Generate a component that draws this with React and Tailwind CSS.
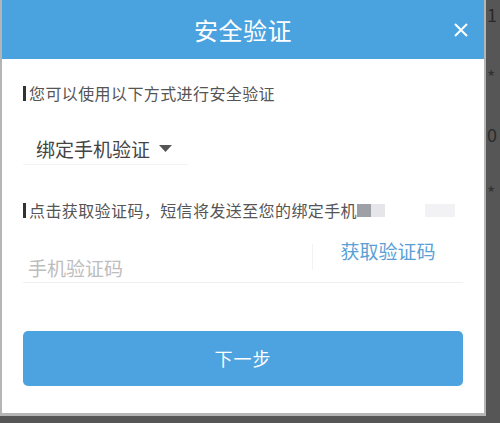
const FONT = { fontFamily: '"Microsoft YaHei", "Noto Sans CJK SC", "Noto Sans", sans-serif' };

// Section label with the small dark bar on the left
function Label({ children }) {
  return (
    <div className="flex items-center text-[16px] leading-none tracking-[0.4px] text-[#555]">
      <span className="mr-[3px] h-[15px] w-[3px] bg-[#333]" />
      {children}
    </div>
  );
}

export default function App() {
  return (
    <div className="flex h-[423px] w-[500px] overflow-hidden bg-[#565656]" style={FONT}>
      <div className="flex h-[416px] w-[486px] shrink-0 flex-col border-b-[3px] border-l-2 border-r-2 border-[#b5b5b5] bg-white">
        {/* Header */}
        <div className="relative flex h-[59px] shrink-0 items-center justify-center bg-[#4aa3df]">
          <h1 className="text-[24px] font-normal tracking-[0.5px] text-white">安全验证</h1>
          <button className="absolute right-[16px] top-[23px]">
            <svg width="14" height="14" viewBox="0 0 14 14">
              <path d="M1 1l12 12M13 1L1 13" stroke="#fff" strokeWidth="2" />
            </svg>
          </button>
        </div>

        <div className="flex flex-1 flex-col px-[21px]">
          <div className="mt-[26px]">
            <Label>您可以使用以下方式进行安全验证</Label>
          </div>

          {/* Method select */}
          <div className="mt-[38px] flex w-[165px] items-center border-b border-[#f4f4f4] pb-[6px] pl-[13px] text-[19px] leading-none text-[#444]">
            绑定手机验证
            <svg className="ml-[9px]" width="13" height="8" viewBox="0 0 13 8">
              <path d="M0 0h13L6.5 7z" fill="#555" />
            </svg>
          </div>

          <div className="mt-[37px] flex items-center">
            <Label>点击获取验证码，短信将发送至您的绑定手机</Label>
            <span className="h-[13px] w-[14px] bg-[#9ea0a8]" />
            <span className="h-[13px] w-[14px] bg-[#e6e6ea]" />
            <span className="ml-[40px] h-[13px] w-[30px] bg-[#f2f2f4]" />
          </div>

          {/* Code input */}
          <div className="mt-[17px] flex h-[48px] items-end border-b border-[#f0f0f0]">
            <input
              className="h-[30px] flex-1 bg-transparent pl-[5px] text-[19px] text-[#444] outline-none placeholder:text-[#bdbdbd]"
              placeholder="手机验证码"
            />
            <div className="mb-[12px] h-[26px] w-px self-end bg-[#f2f2f2]" />
            <button className="mb-[16px] w-[150px] self-start pt-[2px] text-center text-[19px] text-[#5a9fd6]">
              获取验证码
            </button>
          </div>

          <button className="mt-[48px] h-[55px] w-full rounded-[5px] bg-[#4da3df] text-[18px] tracking-[1px] text-white">
            下一步
          </button>
        </div>
      </div>

      {/* Page behind the dialog */}
      <div className="flex flex-1 flex-col items-start pl-[1px] pt-[5px] text-[18px] leading-none text-[#2a2a2a]">
        <span>1</span>
        <span className="mt-[44px] text-[#333]">*</span>
        <span className="mt-[40px]">0</span>
        <span className="mt-[40px] text-[#333]">*</span>
      </div>
    </div>
  );
}
